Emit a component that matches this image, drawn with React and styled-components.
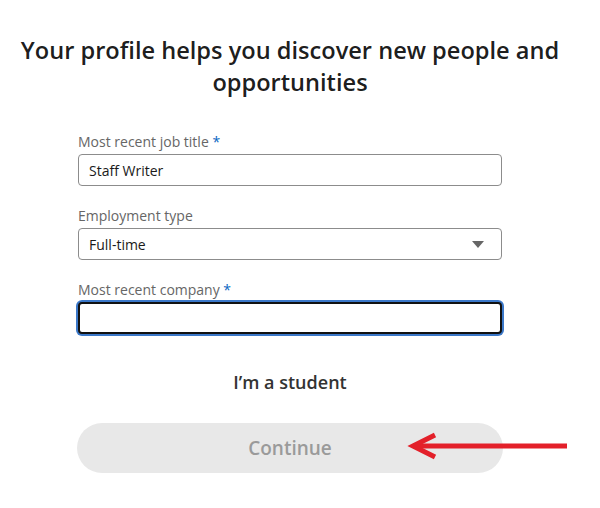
import React from 'react'
import styled, { createGlobalStyle } from 'styled-components'

const GlobalStyle = createGlobalStyle`
  body {
    margin: 0;
    background: #ffffff;
    font-family: "Open Sans", "Noto Sans", Arial, sans-serif;
  }
`

const Page = styled.div`
  width: 580px;
  height: 508px;
  display: flex;
  flex-direction: column;
  align-items: center;
  padding-top: 34px;
  box-sizing: border-box;
  overflow: hidden;
`

const Heading = styled.h1`
  margin: 0;
  width: 570px;
  text-align: center;
  font-size: 23.6px;
  line-height: 32px;
  font-weight: 600;
  color: rgba(0, 0, 0, 0.9);
`

const Form = styled.div`
  width: 424px;
  margin-top: 34px;
  display: flex;
  flex-direction: column;
  gap: 20px;
`

const Field = styled.div`
  display: flex;
  flex-direction: column;
  gap: 2px;
`

const Label = styled.label`
  font-size: 14px;
  line-height: 20px;
  color: #666666;

  & span {
    color: #0a66c2;
  }
`

const Box = styled.div`
  height: 32px;
  box-sizing: border-box;
  border: ${p => (p.focused ? '2px solid #111' : '1px solid #8c8c8c')};
  border-radius: 4px;
  box-shadow: ${p => (p.focused ? '0 0 0 2px #3b78c9' : 'none')};
  display: flex;
  align-items: center;
  justify-content: space-between;
  padding: 0 ${p => (p.focused ? '9px' : '10px')};
  font-size: 14px;
  color: #1a1a1a;
  background: #fff;
`

const Caret = styled.div`
  width: 0;
  height: 0;
  margin-right: 7px;
  border-left: 6px solid transparent;
  border-right: 6px solid transparent;
  border-top: 7px solid #666;
`

const Student = styled.div`
  margin-top: 36px;
  font-size: 18px;
  line-height: 24px;
  font-weight: 600;
  color: #333333;
`

const ButtonRow = styled.div`
  position: relative;
  width: 426px;
  margin-top: 29px;
`

const ContinueButton = styled.button`
  width: 100%;
  height: 50px;
  border: none;
  border-radius: 25px;
  background: #e8e8e8;
  color: #9a9a9a;
  font-family: inherit;
  font-size: 19px;
  font-weight: 600;
`

const Pointer = styled.svg`
  position: absolute;
  left: 330px;
  top: 7px;
`

export default function App() {
  return (
    <Page>
      <GlobalStyle />
      <Heading>Your profile helps you discover new people and opportunities</Heading>
      <Form>
        <Field>
          <Label>Most recent job title <span>*</span></Label>
          <Box>Staff Writer</Box>
        </Field>
        <Field>
          <Label>Employment type</Label>
          <Box>Full-time<Caret /></Box>
        </Field>
        <Field>
          <Label>Most recent company <span>*</span></Label>
          <Box focused />
        </Field>
      </Form>
      <Student>I’m a student</Student>
      <ButtonRow>
        <ContinueButton>Continue</ContinueButton>
        <Pointer width="161" height="34" viewBox="0 0 161 34">
          <line x1="6" y1="16" x2="160" y2="16" stroke="#e3202a" strokeWidth="5" />
          <polyline points="28,5 6,16 28,27" fill="none" stroke="#e3202a" strokeWidth="5" strokeLinejoin="miter" />
        </Pointer>
      </ButtonRow>
    </Page>
  )
}
